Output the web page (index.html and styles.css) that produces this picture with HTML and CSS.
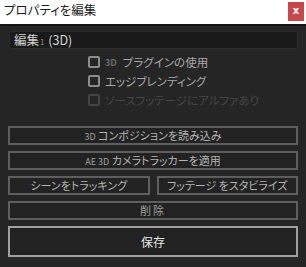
FILE: index.html
```html
<!DOCTYPE html>
<html lang="ja">
<head>
    <meta charset="UTF-8">
    <meta name="viewport" content="width=device-width, initial-scale=1.0">
    <title>プロパティを編集</title>
    <link rel="stylesheet" href="styles.css">
</head>
<body>

    <div class="titlebar">
        <span class="title">プロパティを編集</span>
        <span class="close">x</span>
    </div>

    <div class="dialog">
        <div class="name-field">編集<span class="index">1</span> (3D)</div>

        <div class="options">
            <label class="check"><span class="box"></span><span class="small">3D</span>プラグインの使用</label>
            <label class="check"><span class="box"></span>エッジブレンディング</label>
            <label class="check disabled"><span class="box"></span>ソースフッテージにアルファあり</label>
        </div>

        <div class="actions">
            <button class="btn"><span class="small">3D</span> コンポジションを読み込み</button>
            <button class="btn"><span class="small">AE 3D</span> カメラトラッカーを適用</button>
            <div class="btn-row">
                <button class="btn">シーンをトラッキング</button>
                <button class="btn">フッテージ をスタビライズ</button>
            </div>
            <button class="btn dim">削除</button>
            <button class="btn save">保存</button>
        </div>
    </div>

</body>
</html>
```

FILE: styles.css
```css
* {
    margin: 0;
    padding: 0;
    box-sizing: border-box;
}

body {
    width: 306px;
    height: 267px;
    background: #252525;
    font-family: "Noto Sans CJK JP", "Noto Sans", sans-serif;
    font-feature-settings: "palt";
    overflow: hidden;
}

.titlebar {
    height: 24px;
    background: #ffffff;
    display: flex;
    justify-content: space-between;
    align-items: flex-start;
    padding: 0 2px 0 4px;
}

.title {
    font-size: 12.5px;
    line-height: 20px;
    color: #1c1c1c;
}

.close {
    width: 16px;
    height: 19px;
    margin-top: 2px;
    background: #c8474b;
    color: #ffffff;
    font-family: "DejaVu Sans", sans-serif;
    font-weight: bold;
    font-size: 10px;
    line-height: 18px;
    text-align: center;
}

.dialog {
    border-top: 2px solid #151515;
    padding: 5px 8px 0 9px;
}

.name-field {
    height: 18px;
    background: #1a1a1a;
    border: 1px solid #2c2c2c;
    border-radius: 2px;
    color: #d4d4d4;
    font-size: 12.5px;
    line-height: 16px;
    padding-left: 4px;
}

.name-field .index {
    font-size: 8px;
    color: #8a8a8a;
    margin: 0 1px;
}

.options {
    display: flex;
    flex-direction: column;
    gap: 7px;
    padding: 7px 0 0 79px;
}

.check {
    display: flex;
    align-items: center;
    gap: 5px;
    height: 12px;
    color: #a8a8a8;
    font-size: 11.5px;
}

.check .box {
    width: 12px;
    height: 12px;
    border: 2px solid #8c8c8c;
    border-radius: 2px;
}

.check .small {
    font-size: 9px;
    font-weight: bold;
    color: #6e6e6e;
    margin-right: 1px;
}

.check.disabled {
    color: #474747;
}

.check.disabled .box {
    border-color: #444444;
}

.actions {
    display: flex;
    flex-direction: column;
    gap: 6px;
    padding: 20px 0 0 0;
    margin-left: -1px;
}

.btn {
    height: 19px;
    width: 100%;
    background: #222222;
    border: 2px solid #5e5e5e;
    color: #b4b4b4;
    font-family: inherit;
    font-feature-settings: "palt";
    font-size: 11px;
    line-height: 15px;
}

.btn .small {
    font-size: 9px;
    color: #a0a0a0;
}

.btn-row {
    display: flex;
    gap: 7px;
}

.btn.dim {
    color: #a0a0a0;
    letter-spacing: 2px;
}

.btn.save {
    height: 31px;
    border-color: #a0a0a0;
    color: #e6e6e6;
    font-size: 12px;
}
```
